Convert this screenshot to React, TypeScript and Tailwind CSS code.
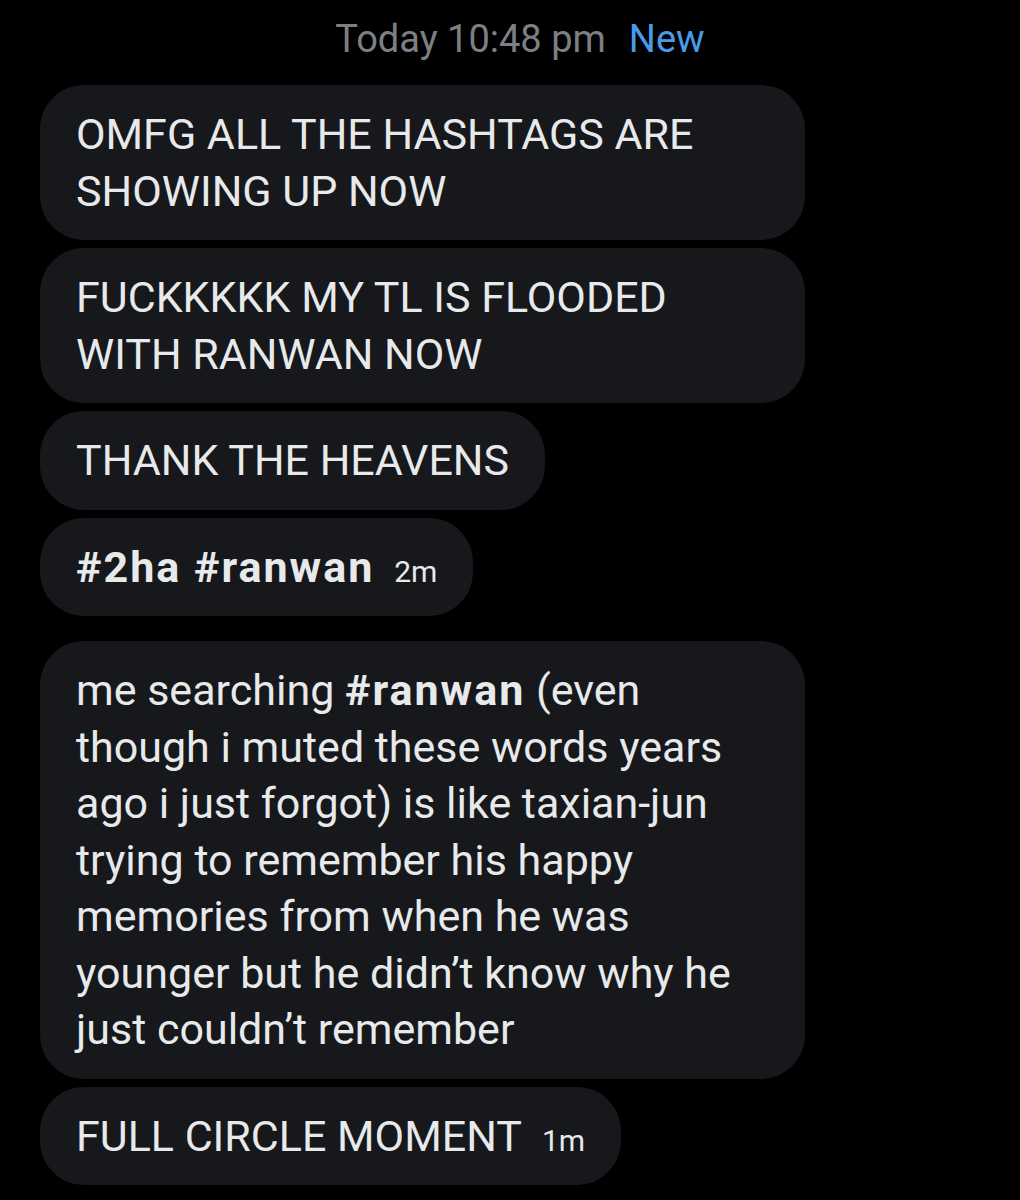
const FONT = "font-['Roboto','Liberation_Sans',sans-serif]"

const BUBBLE =
  'rounded-[44px] bg-[#16181c] px-[36px] py-[21px] text-[43px] leading-[56.5px] text-[#e7e9ea]'

const BOLD = 'font-bold tracking-[2px]'

function Lines(props: { lines: string[] }) {
  return (
    <>
      {props.lines.map((l) => (
        <div key={l} className="whitespace-nowrap">
          {l}
        </div>
      ))}
    </>
  )
}

export default function App() {
  return (
    <div className={`min-h-[1200px] w-[1020px] bg-black ${FONT}`}>
      <div className="flex h-[78px] items-center justify-center pl-[20px] text-[38px]">
        <span className="text-[#7c8085]">Today 10:48 pm</span>
        <span className="ml-[23px] text-[#4a9be6]">New</span>
      </div>

      <div className="flex flex-col items-start gap-[8px] pl-[40px] pt-[7px]">
        <div className={`${BUBBLE} w-[765px]`}>
          <Lines lines={['OMFG ALL THE HASHTAGS ARE', 'SHOWING UP NOW']} />
        </div>
        <div className={`${BUBBLE} w-[765px]`}>
          <Lines lines={['FUCKKKKK MY TL IS FLOODED', 'WITH RANWAN NOW']} />
        </div>
        <div className={`${BUBBLE} w-fit`}>THANK THE HEAVENS</div>
        <div className={`${BUBBLE} w-fit whitespace-nowrap`}>
          <span className={BOLD}>#2ha #ranwan</span>
          <span className="ml-[20px] text-[30px] leading-none">2m</span>
        </div>

        <div className={`${BUBBLE} mt-[17px] w-[765px]`}>
          <div className="whitespace-nowrap">
            me searching <span className={BOLD}>#ranwan</span> (even
          </div>
          <Lines
            lines={[
              'though i muted these words years',
              'ago i just forgot) is like taxian-jun',
              'trying to remember his happy',
              'memories from when he was',
              'younger but he didn’t know why he',
              'just couldn’t remember',
            ]}
          />
        </div>

        <div className={`${BUBBLE} w-fit whitespace-nowrap`}>
          <span>FULL CIRCLE MOMENT</span>
          <span className="ml-[20px] text-[30px] leading-none">1m</span>
        </div>
      </div>
    </div>
  )
}
